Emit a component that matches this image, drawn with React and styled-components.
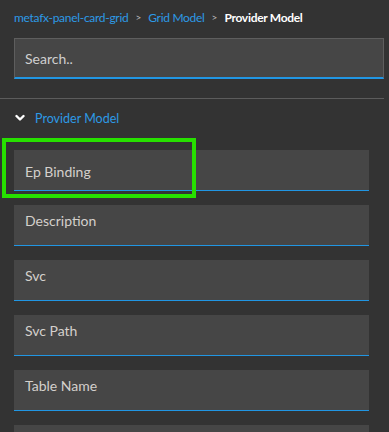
import styled, { createGlobalStyle } from 'styled-components';

const GlobalStyle = createGlobalStyle`
  html, body {
    margin: 0;
    padding: 0;
    background: #333333;
  }
  body {
    font-family: Lato, "Noto Sans", sans-serif;
  }
`;

const StyledPage = styled.div`
  position: relative;
  width: 389px;
  height: 432px;
  overflow: hidden;
  background: #333333;
`;

const StyledBreadcrumb = styled.nav`
  display: flex;
  align-items: center;
  gap: 7px;
  height: 34px;
  padding: 0 14px;
  font-size: 12px;
`;

const StyledCrumbLink = styled.span`
  color: #2d9ae6;
  letter-spacing: -0.3px;
`;

const StyledCrumbSep = styled.span`
  color: #bdbdbd;
  font-size: 10px;
`;

const StyledCrumbCurrent = styled.span`
  color: #ffffff;
  font-weight: 700;
  letter-spacing: -0.3px;
`;

const StyledSearchWrap = styled.div`
  padding: 4px 5px 0 14px;
`;

const StyledSearch = styled.input`
  box-sizing: border-box;
  width: 100%;
  height: 41px;
  margin: 0;
  padding: 0 10px;
  border: 1px solid #5e5e5e;
  border-bottom: 2px solid #2196e3;
  background: #464646;
  color: #d8d8d8;
  font-family: inherit;
  font-size: 14px;
  outline: none;

  &::placeholder {
    color: #cfcfcf;
  }
`;

const StyledDivider = styled.hr`
  margin: 19px 5px 0 0;
  border: 0;
  border-top: 1px solid #5c5c5c;
`;

const StyledSectionHeader = styled.div`
  display: flex;
  align-items: center;
  gap: 10px;
  height: 38px;
  padding: 0 15px;
  color: #2d9ae6;
  font-size: 12.5px;
`;

const StyledFields = styled.div`
  display: flex;
  flex-direction: column;
  gap: 14px;
  padding: 13px 20px 0 14px;
`;

const StyledField = styled.div`
  box-sizing: border-box;
  display: flex;
  align-items: ${({ $centered }) => ($centered ? 'center' : 'flex-start')};
  height: 41px;
  padding: ${({ $centered }) => ($centered ? '3px 11px 0' : '7px 11px 0')};
  background: #464646;
  border-bottom: 1px solid #2196e3;
  color: #d4d0cc;
  font-size: 14px;
`;

const StyledHighlight = styled.div`
  position: absolute;
  left: 2px;
  top: 138px;
  width: 186px;
  height: 52px;
  border: 4px solid #27e000;
  pointer-events: none;
`;

function Chevron() {
  return (
    <svg width="10" height="8" viewBox="0 0 10 8" aria-hidden="true">
      <polyline
        points="1.5,2 5,5.5 8.5,2"
        fill="none"
        stroke="#ffffff"
        strokeWidth="2.4"
        strokeLinecap="round"
        strokeLinejoin="round"
      />
    </svg>
  );
}

const fields = ['Ep Binding', 'Description', 'Svc', 'Svc Path', 'Table Name', ''];

export default function App() {
  return (
    <StyledPage>
      <GlobalStyle />
      <StyledBreadcrumb>
        <StyledCrumbLink>metafx-panel-card-grid</StyledCrumbLink>
        <StyledCrumbSep>&gt;</StyledCrumbSep>
        <StyledCrumbLink>Grid Model</StyledCrumbLink>
        <StyledCrumbSep>&gt;</StyledCrumbSep>
        <StyledCrumbCurrent>Provider Model</StyledCrumbCurrent>
      </StyledBreadcrumb>
      <StyledSearchWrap>
        <StyledSearch placeholder="Search.." />
      </StyledSearchWrap>
      <StyledDivider />
      <StyledSectionHeader>
        <Chevron />
        <span>Provider Model</span>
      </StyledSectionHeader>
      <StyledFields>
        {fields.map((name, i) => (
          <StyledField key={i} $centered={i === 0}>
            {name}
          </StyledField>
        ))}
      </StyledFields>
      <StyledHighlight />
    </StyledPage>
  );
}
